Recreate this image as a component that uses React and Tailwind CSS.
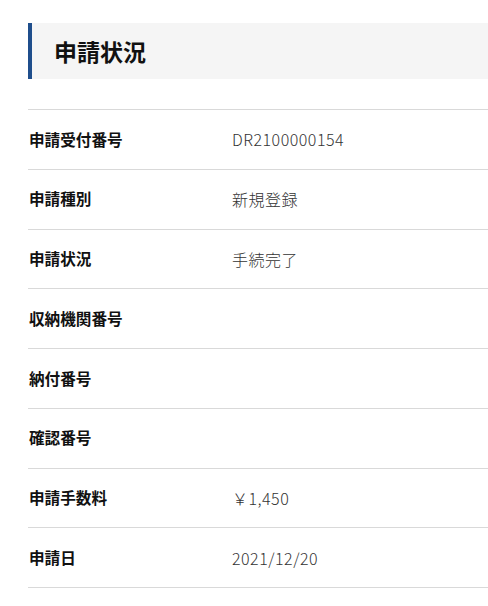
import React from "react";

const rows = [
  ["申請受付番号", "DR2100000154"],
  ["申請種別", "新規登録"],
  ["申請状況", "手続完了"],
  ["収納機関番号", ""],
  ["納付番号", ""],
  ["確認番号", ""],
  ["申請手数料", "￥1,450"],
  ["申請日", "2021/12/20"],
];

export default function App() {
  return (
    <div
      className="w-[488px] h-[606px] bg-white overflow-hidden pl-[28px] pt-[23px]"
      style={{ fontFamily: '"Noto Sans CJK JP", "Noto Sans", sans-serif' }}
    >
      <div className="h-[56px] bg-[#f5f5f5] border-l-4 border-[#1f4e8c] flex items-center pl-[22px]">
        <h1 className="text-[23px] font-bold text-[#111] leading-none">申請状況</h1>
      </div>
      <div className="mt-[30px] border-t border-[#d9d9d9]">
        {rows.map(([k, v]) => (
          <div key={k} className="h-[59.75px] border-b border-[#d9d9d9] flex items-center">
            <div className="w-[204px] pl-[1px] text-[15.6px] font-bold text-[#111]">{k}</div>
            <div className="text-[16px] font-light tracking-[0.5px] text-[#333]">{v}</div>
          </div>
        ))}
      </div>
    </div>
  );
}
